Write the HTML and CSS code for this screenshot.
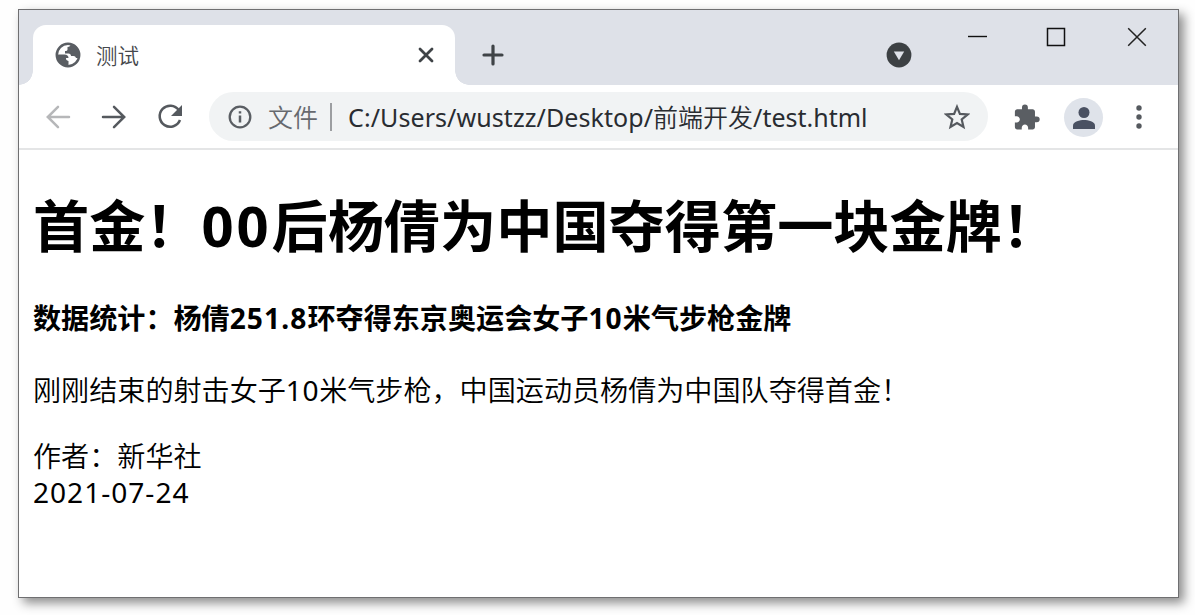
FILE: index.html
```html
<!DOCTYPE html>
<html lang="zh-CN">
<head>
<meta charset="utf-8">
<title>测试</title>
<link rel="stylesheet" href="styles.css">
</head>
<body>
<div class="window">
  <header class="tabstrip">
    <div class="tab">
      <svg class="globe" viewBox="0 0 26 26"><circle cx="13" cy="13" r="11.200" fill="#fff" stroke="#5a5e63" stroke-width="2.500"/><path d="M2 12.500h7.500c2.500 0 4 1.500 4 3.500h-2.500c0 2 .5 2.500 2.500 3v4.500C6 24 1.500 18 2 12.500zM15.500 2c0 2.200-1 3-3 3v2.500c0 1-1 1.500-2.500 1.500v2.500h3.500c1.500 0 2.500 1 2.500 2.500h2.500c1.500 0 2 .7 2.500 2h3C26.500 9 22 2.500 15.500 2z" fill="#5a5e63"/></svg>
      <span class="tab-title">测试</span>
      <svg class="tab-close" viewBox="0 0 16 16"><path d="M2 2l12 12M14 2L2 14" stroke="#3f4347" stroke-width="2.800" stroke-linecap="round"/></svg>
    </div>
    <svg class="new-tab" viewBox="0 0 22 22"><path d="M11 2v18M2 11h18" stroke="#3f4347" stroke-width="3.200" stroke-linecap="round"/></svg>
    <div class="controls">
      <svg class="search-tabs" viewBox="0 0 26 26"><circle cx="13" cy="13" r="12.400" fill="#3c4043"/><path d="M7.800 9.500h10.400L13 18.300z" fill="#dee1e8"/></svg>
      <svg class="minimize" viewBox="0 0 20 20"><path d="M0 9.500h19" stroke="#111" stroke-width="1.400"/></svg>
      <svg class="maximize" viewBox="0 0 20 20"><path d="M1.500 1.500h17v17h-17z" fill="none" stroke="#111" stroke-width="1.500"/></svg>
      <svg class="close" viewBox="0 0 20 20"><path d="M1.200 1.200l17.600 17.600M18.800 1.200L1.200 18.800" stroke="#222" stroke-width="1.500"/></svg>
    </div>
  </header>
  <nav class="toolbar">
    <svg class="nav back" viewBox="0 0 26 26"><path d="M24 13H3M13 2.800L2.800 13 13 23.200" /></svg>
    <svg class="nav forward" viewBox="0 0 26 26"><path d="M2 13h21M13 2.800L23.200 13 13 23.200"/></svg>
    <svg class="nav reload" viewBox="0 0 26 26"><path d="M21.800 6.200A10.500 10.500 0 1 0 23 16"/><path class="solid" d="M25 1v11H14z"/></svg>
    <div class="omnibox">
      <svg class="info" viewBox="0 0 26 26"><circle cx="13" cy="13" r="10.300" fill="none" stroke="#5a5e63" stroke-width="2.300"/><path d="M13 11.500v7M13 7.200v2.400" stroke="#5a5e63" stroke-width="2.500"/></svg>
      <span class="scheme">文件</span>
      <span class="divider"></span>
      <span class="url"><span class="path">C:/Users/wustzz/Desktop/</span>前端开发<span class="file">/test.html</span></span>
      <svg class="star" viewBox="0 0 26 26"><path d="M13 2.800l2.900 7.100 7.700.6-5.900 5 1.800 7.500-6.500-4-6.500 4 1.800-7.500-5.900-5 7.700-.6z" fill="none" stroke="#55595e" stroke-width="2.200"/></svg>
    </div>
    <svg class="puzzle" viewBox="1.500 0.500 21.500 22"><path d="M20.500 11H19V7c0-1.100-.9-2-2-2h-4V3.500a2.500 2.500 0 0 0-5 0V5H4c-1.100 0-2 .9-2 2v3.800h1.500c1.500 0 2.700 1.200 2.700 2.700S5 16.200 3.500 16.200H2V20c0 1.100.9 2 2 2h3.800v-1.500c0-1.500 1.200-2.700 2.700-2.700s2.700 1.200 2.700 2.700V22H17c1.100 0 2-.9 2-2v-4h1.500a2.500 2.500 0 0 0 0-5z" fill="#5a5e63"/></svg>
    <div class="avatar"><svg viewBox="0 0 22 22"><circle cx="11" cy="5.500" r="5.500" fill="#4a5162"/><path d="M0 22v-3.500c0-4 7-5.500 11-5.500s11 1.500 11 5.500V22z" fill="#4a5162"/></svg></div>
    <svg class="menu" viewBox="0 0 6 24"><circle cx="3" cy="3" r="2.700"/><circle cx="3" cy="12" r="2.700"/><circle cx="3" cy="21" r="2.700"/></svg>
  </nav>
  <main class="page">
    <h1>首金！<span class="num">00</span>后杨倩为中国夺得第一块金牌！</h1>
    <h4>数据统计：杨倩<span class="num">251.8</span>环夺得东京奥运会女子<span class="num">10</span>米气步枪金牌</h4>
    <p>刚刚结束的射击女子<span class="num">10</span>米气步枪，中国运动员杨倩为中国队夺得首金！</p>
    <p class="byline">作者：新华社<br><span class="num date">2021-07-24</span></p>
  </main>
</div>
</body>
</html>
```
FILE: styles.css
```css
* { box-sizing: border-box; }
html, body { height: 100%; }
body {
  margin: 0;
  padding: 9px 16px 17px 18px;
  background: #fefefe;
  font-family: "Noto Sans", "Noto Sans CJK SC", sans-serif;
  overflow: hidden;
}
svg { display: block; flex: none; }
.window {
  height: 589px;
  display: flex;
  flex-direction: column;
  background: #fff;
  border: 1px solid #6f6f71;
  box-shadow: 5px 5px 10px rgba(0, 0, 0, .45);
}
.tabstrip {
  height: 75px;
  flex: none;
  display: flex;
  align-items: flex-end;
  padding-left: 14px;
  background: #dee1e8;
}
.tab {
  position: relative;
  width: 422px;
  height: 60px;
  display: flex;
  align-items: center;
  padding: 0 21px 0 22px;
  background: #fff;
  border-radius: 13px 13px 0 0;
}
.tab::before, .tab::after {
  content: "";
  position: absolute;
  bottom: 0;
  width: 14px;
  height: 14px;
}
.tab::before { left: -14px; background: radial-gradient(circle at 0 0, transparent 13.5px, #fff 14px); }
.tab::after { right: -14px; background: radial-gradient(circle at 100% 0, transparent 13.5px, #fff 14px); }
.globe { width: 26px; height: 26px; }
.tab-title {
  flex: 1;
  margin-left: 15px;
  font: 350 21.5px/30px "Noto Sans CJK SC", sans-serif;
  color: #45484c;
}
.tab-close { width: 16px; height: 16px; }
.new-tab { width: 22px; height: 22px; margin: 0 0 19px 27px; }
.controls {
  flex: 1;
  height: 75px;
  display: flex;
  justify-content: flex-end;
  align-items: flex-start;
  padding: 17px 31px 0 0;
}
.search-tabs { width: 26px; height: 26px; margin: 15px 56px 0 0; }
.minimize, .maximize, .close { width: 20px; height: 20px; }
.maximize { margin: 0 61px 0 58px; }
.toolbar {
  height: 65px;
  flex: none;
  display: flex;
  align-items: center;
  padding: 1px 36px 1px 26px;
  border-bottom: 2px solid #e4e5e6;
}
.nav { width: 26px; height: 26px; margin-right: 30px; fill: none; stroke: #55595e; stroke-width: 2.5; stroke-linecap: round; }
.back { stroke: #b6b7b9; }
.reload { margin-right: 26px; stroke-linecap: butt; }
.solid { fill: #55595e; stroke: none; }
.omnibox {
  width: 779px;
  height: 49px;
  display: flex;
  align-items: center;
  padding: 0 18px 0 18px;
  border-radius: 25px;
  background: #f1f3f4;
  font-size: 25px;
  line-height: 36px;
  white-space: nowrap;
  color: #292c31;
}
.info { width: 26px; height: 26px; }
.scheme { margin-left: 15px; font-weight: 350; color: #66696e; }
.divider { width: 2px; height: 28px; margin: 0 16px 0 12px; background: #9c9ea1; }
.url { flex: 1; font-weight: 350; }
.path, .file { font-weight: 400; }
.path { letter-spacing: .08px; }
.star { width: 26px; height: 26px; }
.puzzle { width: 26px; height: 26px; margin-left: 26px; }
.avatar {
  width: 39px;
  height: 39px;
  margin: 2px 33px 0 24px;
  display: grid;
  place-items: center;
  border-radius: 50%;
  background: #dfe3ea;
}
.avatar svg { width: 22px; height: 22px; }
.menu { width: 6px; height: 24px; fill: #55595e; }
.page { padding: 0 14px; color: #000; font-size: 28.1px; white-space: nowrap; }
h1 { margin: 37px 0 0; font-size: 56.2px; line-height: 76px; }
h4 { margin: 36px 0 0; font-size: 28.1px; line-height: 38px; }
h1 .num { letter-spacing: .05em; }
h4 .num { letter-spacing: .04em; }
p { margin: 34px 0 0; font-weight: 350; line-height: 38px; }
p .num { font-weight: 400; letter-spacing: .02em; }
.byline { margin-top: 29px; line-height: 36px; }
.byline .date { letter-spacing: .035em; }
```
